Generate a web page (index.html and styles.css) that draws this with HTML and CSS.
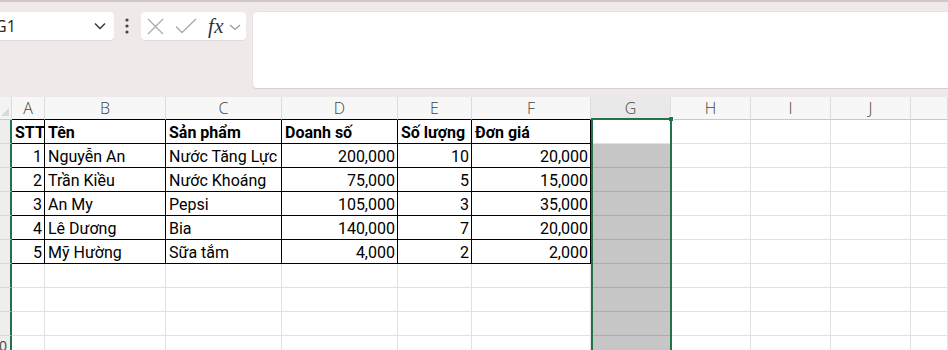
FILE: index.html
```html
<!DOCTYPE html>
<html lang="vi">
<head>
<meta charset="utf-8">
<title>Sheet</title>
<link rel="stylesheet" href="styles.css">
</head>
<body>
<div class="app">
  <div class="ribbon">
    <div class="namebox">
      <span class="nb-text">G1</span>
      <svg class="nb-chev" width="12" height="8" viewBox="0 0 12 8"><polyline points="1,1.5 6,6.5 11,1.5" fill="none" stroke="#333" stroke-width="1.4"/></svg>
    </div>
    <svg class="dots" width="6" height="16" viewBox="0 0 6 16"><circle cx="3" cy="2" r="1.6" fill="#444"/><circle cx="3" cy="8" r="1.6" fill="#444"/><circle cx="3" cy="14" r="1.6" fill="#444"/></svg>
    <div class="fxbox">
      <svg class="ic-x" width="17" height="17" viewBox="0 0 17 17"><path d="M1 1 L16 16 M16 1 L1 16" stroke="#aaa" stroke-width="1.3" fill="none"/></svg>
      <svg class="ic-check" width="22" height="16" viewBox="0 0 22 16"><polyline points="1,8.5 7,14.5 21,1" fill="none" stroke="#aaa" stroke-width="1.3"/></svg>
      <span class="fx">fx</span>
      <svg class="fx-chev" width="12" height="7" viewBox="0 0 12 7"><polyline points="1,1 6,5.5 11,1" fill="none" stroke="#999" stroke-width="1.2"/></svg>
    </div>
    <div class="formula"></div>
  </div>

  <div class="sheet">
    <div class="grid">
      <div class="c corner"><span class="tri"></span></div>
      <div class="c colh tb">A</div>
      <div class="c colh tb">B</div>
      <div class="c colh tb">C</div>
      <div class="c colh tb">D</div>
      <div class="c colh tb">E</div>
      <div class="c colh tb">F</div>
      <div class="c colh sel">G</div>
      <div class="c colh">H</div>
      <div class="c colh">I</div>
      <div class="c colh">J</div>
      <div class="c colh"></div>

      <div class="c rowh"></div>
      <div class="c d b r">STT</div>
      <div class="c d b">Tên</div>
      <div class="c d b">Sản phẩm</div>
      <div class="c d b">Doanh số</div>
      <div class="c d b">Số lượng</div>
      <div class="c d b">Đơn giá</div>
      <div class="c g1"></div>
      <div class="c"></div><div class="c"></div><div class="c"></div><div class="c"></div>

      <div class="c rowh"></div>
      <div class="c d r">1</div>
      <div class="c d">Nguyễn An</div>
      <div class="c d">Nước Tăng Lực</div>
      <div class="c d r">200,000</div>
      <div class="c d r">10</div>
      <div class="c d r">20,000</div>
      <div class="c gs"></div>
      <div class="c"></div><div class="c"></div><div class="c"></div><div class="c"></div>

      <div class="c rowh"></div>
      <div class="c d r">2</div>
      <div class="c d">Trần Kiều</div>
      <div class="c d">Nước Khoáng</div>
      <div class="c d r">75,000</div>
      <div class="c d r">5</div>
      <div class="c d r">15,000</div>
      <div class="c gs"></div>
      <div class="c"></div><div class="c"></div><div class="c"></div><div class="c"></div>

      <div class="c rowh"></div>
      <div class="c d r">3</div>
      <div class="c d">An My</div>
      <div class="c d">Pepsi</div>
      <div class="c d r">105,000</div>
      <div class="c d r">3</div>
      <div class="c d r">35,000</div>
      <div class="c gs"></div>
      <div class="c"></div><div class="c"></div><div class="c"></div><div class="c"></div>

      <div class="c rowh"></div>
      <div class="c d r">4</div>
      <div class="c d">Lê Dương</div>
      <div class="c d">Bia</div>
      <div class="c d r">140,000</div>
      <div class="c d r">7</div>
      <div class="c d r">20,000</div>
      <div class="c gs"></div>
      <div class="c"></div><div class="c"></div><div class="c"></div><div class="c"></div>

      <div class="c rowh"></div>
      <div class="c d r">5</div>
      <div class="c d">Mỹ Hường</div>
      <div class="c d">Sữa tắm</div>
      <div class="c d r">4,000</div>
      <div class="c d r">2</div>
      <div class="c d r">2,000</div>
      <div class="c gs"></div>
      <div class="c"></div><div class="c"></div><div class="c"></div><div class="c"></div>

      <div class="c rowh"></div>
      <div class="c"></div><div class="c"></div><div class="c"></div><div class="c"></div><div class="c"></div><div class="c"></div>
      <div class="c gs"></div>
      <div class="c"></div><div class="c"></div><div class="c"></div><div class="c"></div>

      <div class="c rowh"></div>
      <div class="c"></div><div class="c"></div><div class="c"></div><div class="c"></div><div class="c"></div><div class="c"></div>
      <div class="c gs"></div>
      <div class="c"></div><div class="c"></div><div class="c"></div><div class="c"></div>

      <div class="c rowh"></div>
      <div class="c"></div><div class="c"></div><div class="c"></div><div class="c"></div><div class="c"></div><div class="c"></div>
      <div class="c gs"></div>
      <div class="c"></div><div class="c"></div><div class="c"></div><div class="c"></div>

      <div class="c rowh rn10">10</div>
      <div class="c"></div><div class="c"></div><div class="c"></div><div class="c"></div><div class="c"></div><div class="c"></div>
      <div class="c gs"></div>
      <div class="c"></div><div class="c"></div><div class="c"></div><div class="c"></div>
    </div>
    <div class="selection"><span class="handle"></span></div>
  </div>
</div>
</body>
</html>
```

FILE: styles.css
```css
* { box-sizing: border-box; }
html, body { margin: 0; padding: 0; }
body {
  width: 948px;
  height: 350px;
  overflow: hidden;
  background: #fff;
  font-family: Roboto, "Noto Sans", sans-serif;
}
.app { width: 948px; height: 350px; overflow: hidden; }

/* ribbon / formula bar */
.ribbon {
  height: 97px;
  background: #efe9e9;
  border-top: 2px solid #cdc8c8;
  display: flex;
  align-items: flex-start;
  padding-top: 10px;
}
.ribbon > * { flex-shrink: 0; }
.namebox {
  margin-left: -8px;
  width: 122px;
  height: 28px;
  background: #fff;
  border-radius: 4px;
  box-shadow: 0 1px 0 #e0dada;
  display: flex;
  align-items: center;
  padding-left: 4px;
  padding-right: 8px;
  justify-content: space-between;
}
.nb-text {
  font-family: "Open Sans", sans-serif;
  font-size: 16px;
  color: #222;
  margin-left: -1px;
}
.dots { margin-left: 10px; margin-top: 6px; }
.fxbox {
  margin-left: 11px;
  width: 105px;
  height: 28px;
  background: #fff;
  border-radius: 4px;
  box-shadow: 0 1px 0 #e0dada;
  display: flex;
  align-items: center;
  padding-left: 6px;
}
.ic-check { margin-left: 11px; }
.fx {
  margin-left: 11px;
  font-family: "Liberation Serif", serif;
  font-style: italic;
  font-size: 21px;
  line-height: 20px;
  color: #333;
  letter-spacing: 0.5px;
}
.fx-chev { margin-left: 5px; margin-top: 2px; }
.formula {
  margin-left: 7px;
  width: 720px;
  height: 76px;
  background: #fff;
  border-radius: 4px;
  box-shadow: 0 1px 0 #d6d0d0, 0 0 0 1px #e8e2e2;
}

/* sheet */
.sheet { position: relative; }
.grid {
  display: grid;
  grid-template-columns: 12px 33px 121px 116px 116px 74px 119px 80px 80px 80px 80px 37px;
  grid-template-rows: 23px repeat(10, 24px);
}
.c {
  border-right: 1px solid #e1e1e1;
  border-bottom: 1px solid #e1e1e1;
  font-size: 16px;
  color: #000;
  white-space: nowrap;
  overflow: hidden;
}
.corner {
  background: #f3f3f3;
  border-right: 1px solid #dadada;
  border-bottom: 1px solid #c8c8c8;
  position: relative;
}
.tri {
  position: absolute;
  right: 2px;
  bottom: 3px;
  width: 0;
  height: 0;
  border-left: 8px solid transparent;
  border-bottom: 8px solid #d8d8d8;
}
.colh {
  background: #f7f7f7;
  border-right: 1px solid #dcdcdc;
  border-bottom: 1px solid #c8c8c8;
  font-family: "Open Sans", sans-serif;
  font-weight: 300;
  font-size: 16px;
  color: #444;
  text-align: center;
  line-height: 22px;
}
.colh.tb { border-bottom-color: #000; }
.colh.sel { background: #e9e9e9; }
.rowh {
  background: #eeeeee;
  border-right: 2px solid #21734a;
  border-bottom: 1px solid #d6d6d6;
  font-family: "Open Sans", sans-serif;
  font-size: 14px;
  color: #444;
  line-height: 20px;
}
.rn10 { text-indent: -9px; }
.d {
  border-right-color: #000;
  border-bottom-color: #000;
  padding: 2px 3px 0 3px;
  line-height: 22px;
}
.d.r { text-align: right; padding-right: 2px; }
.d.b { font-weight: 700; }
.g1 { background: #fff; }
.gs {
  background: #c6c6c6;
  border-bottom-color: #acacac;
  border-right-color: #fff;
}

.selection {
  position: absolute;
  left: 591px;
  top: 21px;
  width: 81px;
  height: 260px;
  border: 2px solid #21734a;
}
.handle {
  position: absolute;
  right: -4px;
  top: -4px;
  width: 5px;
  height: 5px;
  background: #21734a;
  border: 1px solid #fff;
  border-left: 0;
  border-bottom: 0;
}
```
